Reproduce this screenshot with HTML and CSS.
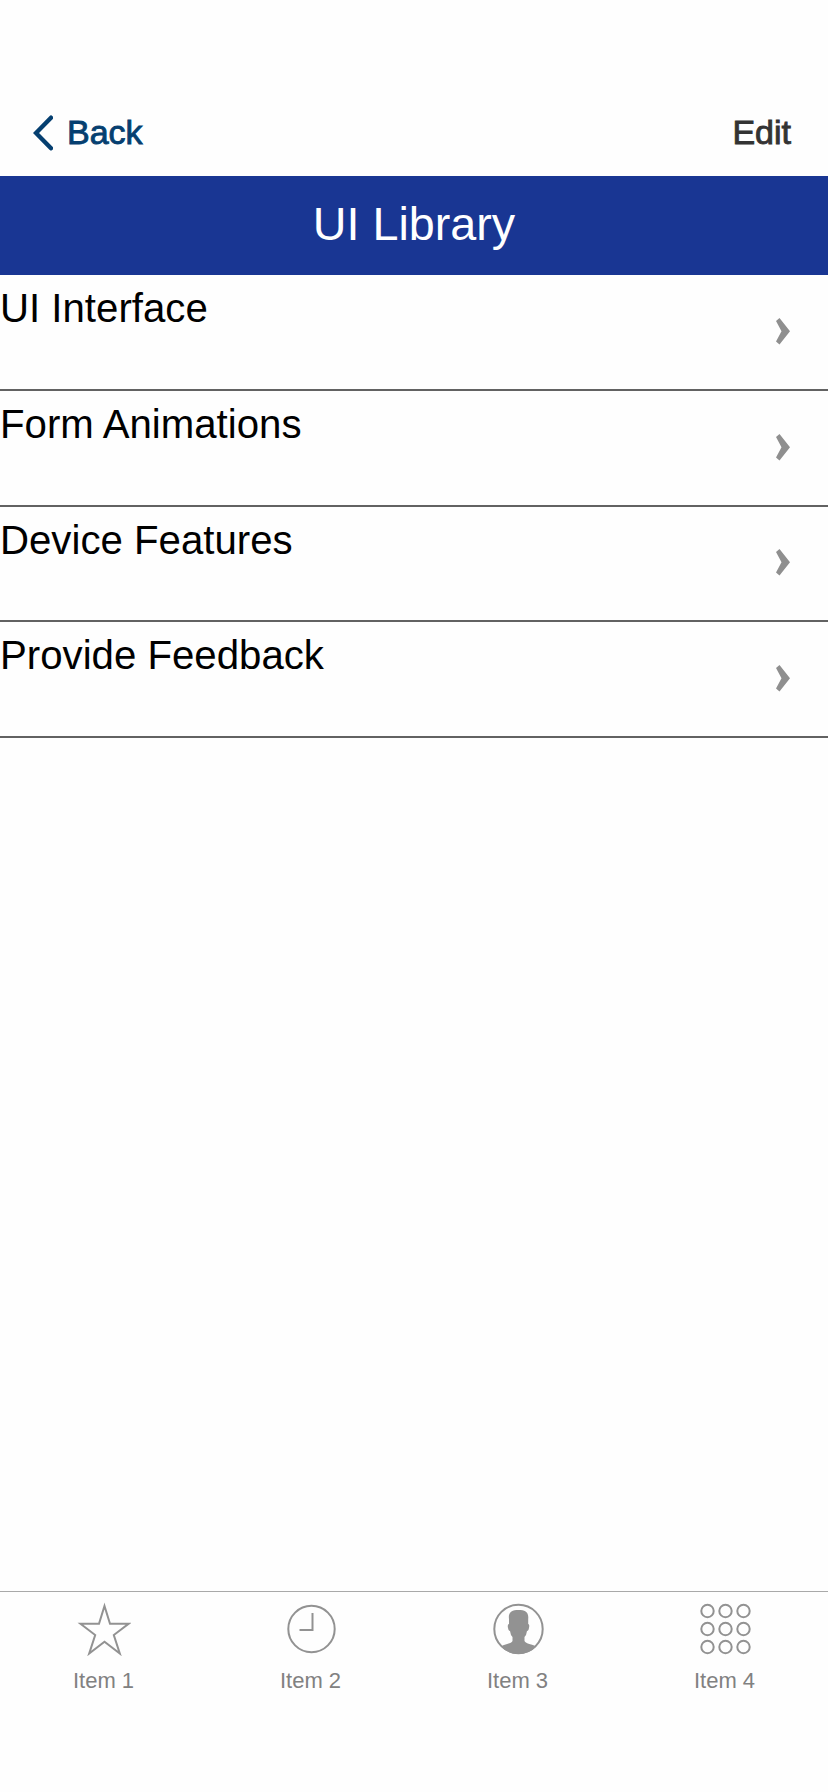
FILE: index.html
```html
<!DOCTYPE html>
<html lang="en">
<head>
<meta charset="utf-8">
<title>UI Library</title>
<link rel="stylesheet" href="styles.css">
</head>
<body>
<div class="screen">
  <nav class="topbar">
    <a class="back"><svg class="back-icon" width="20" height="36" viewBox="0 0 20 36"><path d="M18 2.700 3 18 18 33.300"/></svg><span>Back</span></a>
    <a class="edit">Edit</a>
  </nav>
  <h1 class="title">UI Library</h1>
  <ul class="list">
    <li class="row"><span>UI Interface</span><svg class="chevron" width="14" height="27" viewBox="0 0 14 27"><path d="M3.500 0 14 13.300 3.500 26.500 0 23.500 5.500 13.300 0 3Z"/></svg></li>
    <li class="row"><span>Form Animations</span><svg class="chevron" width="14" height="27" viewBox="0 0 14 27"><path d="M3.500 0 14 13.300 3.500 26.500 0 23.500 5.500 13.300 0 3Z"/></svg></li>
    <li class="row"><span>Device Features</span><svg class="chevron" width="14" height="27" viewBox="0 0 14 27"><path d="M3.500 0 14 13.300 3.500 26.500 0 23.500 5.500 13.300 0 3Z"/></svg></li>
    <li class="row"><span>Provide Feedback</span><svg class="chevron" width="14" height="27" viewBox="0 0 14 27"><path d="M3.500 0 14 13.300 3.500 26.500 0 23.500 5.500 13.300 0 3Z"/></svg></li>
  </ul>
  <footer class="tabs">
    <a class="tab">
      <svg class="tab-icon" width="54" height="54" viewBox="0 0 54 54"><path d="M27.500 4 33 21.800H51.500L36.800 33 42.800 51.500 27.500 39.700 12.200 51.500 18.200 33 3.500 21.800H22Z"/></svg>
      <span>Item 1</span>
    </a>
    <a class="tab">
      <svg class="tab-icon" width="54" height="54" viewBox="0 0 54 54"><circle cx="27.500" cy="27" r="23.200"/><path d="M28.500 11V28H15.500"/></svg>
      <span>Item 2</span>
    </a>
    <a class="tab">
      <svg class="tab-icon" width="54" height="54" viewBox="0 0 54 54"><circle cx="27.500" cy="27" r="24.200"/><path class="solid" d="M18 17C17 10 21 8 27.500 8S38 10 37.200 17V22Q38.800 22 38 26Q37.500 29.500 36 29Q35.500 33 33.500 35V39C35 42 41 42 45.500 44.500Q38 52 27.500 52T10 44.500C14 42 20 42 21.500 39V35Q19.500 33 19 29Q17.500 29.500 17 26Q16.200 22 18 22Z"/></svg>
      <span>Item 3</span>
    </a>
    <a class="tab">
      <svg class="tab-icon" width="54" height="54" viewBox="0 0 54 54"><circle cx="9.500" cy="9" r="6.200"/><circle cx="27.500" cy="9" r="6.200"/><circle cx="45.500" cy="9" r="6.200"/><circle cx="9.500" cy="27" r="6.200"/><circle cx="27.500" cy="27" r="6.200"/><circle cx="45.500" cy="27" r="6.200"/><circle cx="9.500" cy="45" r="6.200"/><circle cx="27.500" cy="45" r="6.200"/><circle cx="45.500" cy="45" r="6.200"/></svg>
      <span>Item 4</span>
    </a>
  </footer>
</div>
</body>
</html>
```
FILE: styles.css
```css
* { box-sizing: border-box; }
body {
  margin: 0;
  background: #fefefe;
  font-family: "Liberation Sans", Arial, sans-serif;
}
.screen {
  display: flex;
  flex-direction: column;
  height: 1792px;
}
.topbar {
  display: flex;
  align-items: center;
  justify-content: space-between;
  height: 176px;
  padding: 89px 37px 0 33px;
  font-size: 34px;
  line-height: 38px;
}
.topbar span,
.edit {
  padding-bottom: 2px;
}
.back {
  display: flex;
  align-items: center;
  gap: 14px;
  color: #053f70;
  -webkit-text-stroke: 0.9px #053f70;
}
.back-icon {
  fill: none;
  stroke: #053f70;
  stroke-width: 4.4;
  stroke-linecap: round;
}
.edit {
  color: #333;
  -webkit-text-stroke: 0.9px #333;
}
.title {
  height: 99px;
  margin: 0;
  background: #193693;
  color: #fff;
  font-size: 46.7px;
  font-weight: 400;
  line-height: 97px;
  text-align: center;
}
.list {
  margin: 0;
  padding: 0.6px 0 0;
  list-style: none;
}
.row {
  display: flex;
  justify-content: space-between;
  height: 115.6px;
  padding: 10.8px 38px 0 0;
  border-bottom: 2px solid #626262;
  color: #000;
  font-size: 40.2px;
  line-height: 46px;
}
.chevron {
  margin-top: 31.7px;
  fill: #8f8f8f;
}
.tabs {
  display: grid;
  grid-template-columns: repeat(4, 1fr);
  height: 201px;
  margin-top: auto;
  padding-top: 10px;
  border-top: 1px solid #a9a9a9;
}
.tab {
  display: flex;
  flex-direction: column;
  align-items: center;
  gap: 12px;
  color: #818181;
  font-size: 22px;
  line-height: 26px;
}
.tab-icon {
  fill: none;
  stroke: #929292;
  stroke-width: 2;
}
.solid {
  fill: #929292;
  stroke: none;
}
```
